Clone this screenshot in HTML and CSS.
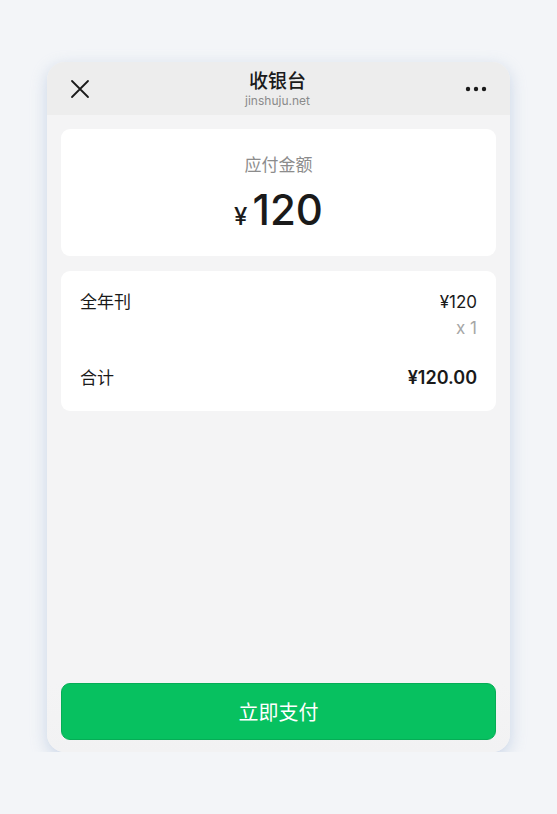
FILE: index.html
```html
<!DOCTYPE html>
<html lang="zh">
<head>
  <meta charset="UTF-8">
  <title>收银台</title>
  <meta name="viewport" content="width=device-width, initial-scale=1.0">
  <link rel="stylesheet" href="styles.css">
</head>
<body>

<div class="phone">
  <div class="topbar">
    <svg class="close" width="20" height="20" viewBox="0 0 20 20">
      <path d="M2 2 L18 18 M18 2 L2 18" stroke="#1a1a1a" stroke-width="1.8" stroke-linecap="round"/>
    </svg>
    <div class="title">
      <div class="title-main">收银台</div>
      <div class="title-sub">jinshuju.net</div>
    </div>
    <svg class="more" width="22" height="6" viewBox="0 0 22 6">
      <circle cx="3" cy="3" r="2.2" fill="#1a1a1a"/>
      <circle cx="11" cy="3" r="2.2" fill="#1a1a1a"/>
      <circle cx="19" cy="3" r="2.2" fill="#1a1a1a"/>
    </svg>
  </div>

  <div class="content">
    <div class="box amount-box">
      <div class="amount-label">应付金额</div>
      <div class="amount"><span class="yen">¥</span>120</div>
    </div>

    <div class="box order-box">
      <div class="row item-row">
        <span>全年刊</span>
        <div class="item-right">
          <div>¥120</div>
          <div class="qty">x 1</div>
        </div>
      </div>
      <div class="row total-row">
        <span>合计</span>
        <span class="total">¥120.00</span>
      </div>
    </div>
  </div>

  <div class="footer">
    <button class="pay">立即支付</button>
  </div>
</div>

</body>
</html>
```

FILE: styles.css
```css
body { margin: 0; background: #f3f5f8; font-family: Inter, "Noto Sans CJK SC", sans-serif; color: #1a1a1a; }
.phone { width: 463px; height: 690px; margin: 62px auto 0; background: #f4f4f5; border-radius: 18px; overflow: hidden; display: flex; flex-direction: column; box-shadow: 0 5px 16px rgba(150, 175, 210, 0.45); }

.topbar { height: 53px; background: #ededed; display: flex; align-items: center; justify-content: space-between; padding: 0 23px 0 23px; box-sizing: border-box; flex-shrink: 0; }
.title { text-align: center; margin-top: 1px; }
.title-main { font-size: 19px; font-weight: 500; line-height: 22px; }
.title-sub { font-size: 12px; color: #8a8a8a; line-height: 15px; }

.content { flex: 1; padding: 14px; display: flex; flex-direction: column; gap: 15px; }
.box { background: white; border-radius: 9px; }

.amount-box { height: 127px; box-sizing: border-box; padding-top: 23px; text-align: center; }
.amount-label { font-size: 17px; color: #8c8c8c; line-height: 26px; }
.amount { font-size: 42px; font-weight: 500; line-height: 50px; margin-top: 7px; }
.yen { font-size: 24px; margin-right: 5px; }

.order-box { height: 140px; box-sizing: border-box; padding: 19px 19px 0 19px; }
.row { display: flex; justify-content: space-between; font-size: 17px; }
.item-right { text-align: right; line-height: 25px; font-size: 17px; }
.item-row { line-height: 25px; }
.qty { color: #a6a6a6; margin-top: 1px; }
.total-row { margin-top: 23px; line-height: 28px; }
.total { font-size: 18px; font-weight: 600; }

.footer { padding: 0 14px 12px; background: linear-gradient(#f4f4f5, #f2f2f3); }
.pay { width: 100%; height: 57px; background: #07c160; border: 1px solid #06ad56; border-radius: 9px; color: white; font-size: 20px; font-family: "Noto Sans CJK SC", sans-serif; cursor: pointer; }
```
